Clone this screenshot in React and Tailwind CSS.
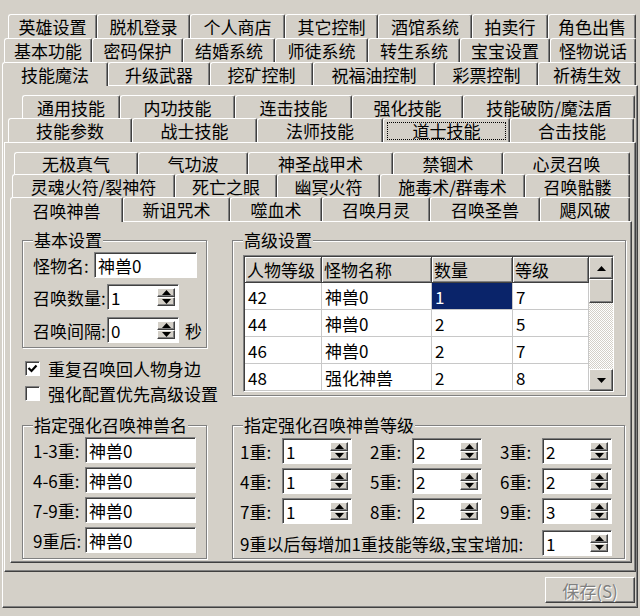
const FACE = "bg-[#d4d0c8]";
const RAISED =
  "border border-t-white border-l-white border-b-[#404040] border-r-[#404040] shadow-[inset_-1px_-1px_0_#808080]";
const SUNKEN =
  "border border-t-[#808080] border-l-[#808080] border-b-white border-r-white shadow-[inset_1px_1px_0_#404040]";
const GROUP = "relative border border-[#808080] shadow-[inset_1px_1px_0_#fff,1px_1px_0_#fff]";

const OUTER_ROWS = [
  {
    cls: "pl-[8px] h-[24px]",
    tabs: [
      ["英雄设置", "w-[89px]"],
      ["脱机登录", "w-[93px]"],
      ["个人商店", "w-[95px]"],
      ["其它控制", "w-[93px]"],
      ["酒馆系统", "w-[94px]"],
      ["拍卖行", "w-[76px]"],
      ["角色出售", "w-[88px]"],
    ],
  },
  {
    cls: "pl-[4px] h-[24px]",
    tabs: [
      ["基本功能", "w-[88px]"],
      ["密码保护", "w-[91px]"],
      ["结婚系统", "w-[92px]"],
      ["师徒系统", "w-[93px]"],
      ["转生系统", "w-[92px]"],
      ["宝宝设置", "w-[90px]"],
      ["怪物说话", "w-[86px]"],
    ],
  },
  {
    cls: "pl-[2px] h-[23px]",
    tabs: [
      ["技能魔法", "w-[106px]", "active"],
      ["升级武器", "w-[102px]"],
      ["挖矿控制", "w-[103px]"],
      ["祝福油控制", "w-[122px]"],
      ["彩票控制", "w-[103px]"],
      ["祈祷生效", "w-[98px]"],
    ],
  },
];

const SKILL_ROWS = [
  {
    cls: "pl-[19px] h-[23px]",
    tabs: [
      ["通用技能", "w-[98px]"],
      ["内功技能", "w-[115px]"],
      ["连击技能", "w-[117px]"],
      ["强化技能", "w-[111px]"],
      ["技能破防/魔法盾", "w-[172px]"],
    ],
  },
  {
    cls: "pl-[5px] h-[24px]",
    tabs: [
      ["技能参数", "w-[124px]"],
      ["战士技能", "w-[125px]"],
      ["法师技能", "w-[126px]"],
      ["道士技能", "w-[127px]", "focus"],
      ["合击技能", "w-[124px]"],
    ],
  },
];

const TAOIST_ROWS = [
  {
    cls: "pl-[9px] h-[22px]",
    tabs: [
      ["无极真气", "w-[124px]"],
      ["气功波", "w-[110px]"],
      ["神圣战甲术", "w-[145px]"],
      ["禁锢术", "w-[110px]"],
      ["心灵召唤", "w-[127px]"],
    ],
  },
  {
    cls: "pl-[7px] h-[23px]",
    tabs: [
      ["灵魂火符/裂神符", "w-[163px]"],
      ["死亡之眼", "w-[102px]"],
      ["幽冥火符", "w-[103px]"],
      ["施毒术/群毒术", "w-[145px]"],
      ["召唤骷髅", "w-[105px]"],
    ],
  },
  {
    cls: "pl-[5px] h-[24px]",
    tabs: [
      ["召唤神兽", "w-[113px]", "active"],
      ["新诅咒术", "w-[107px]"],
      ["噬血术", "w-[92px]"],
      ["召唤月灵", "w-[108px]"],
      ["召唤圣兽", "w-[110px]"],
      ["飓风破", "w-[90px]"],
    ],
  },
];

const TABLE = [
  ["42", "神兽0", "1", "7"],
  ["44", "神兽0", "2", "5"],
  ["46", "神兽0", "2", "7"],
  ["48", "强化神兽", "2", "8"],
];

const LEVELS = [
  [["1重:", "1"], ["2重:", "2"], ["3重:", "2"]],
  [["4重:", "1"], ["5重:", "2"], ["6重:", "2"]],
  [["7重:", "1"], ["8重:", "2"], ["9重:", "3"]],
];

function TabRows({ rows }) {
  return (
    <div className="flex flex-col">
      {rows.map((row, i) => (
        <div key={i} className={`flex items-end ${row.cls}`}>
          {row.tabs.map(([label, w, state]) => (
            <div
              key={label}
              className={`${w} flex items-center justify-center shrink-0 ${FACE} border-t border-l border-white border-r border-r-[#404040] shadow-[inset_-1px_0_0_#808080] rounded-tl-[3px] rounded-tr-[2px] ${
                state === "active" ? "h-[calc(100%+1px)] -mb-px relative z-10" : "h-full"
              }`}
            >
              {state === "focus" ? (
                <span className="flex items-center justify-center w-[calc(100%-6px)] h-[calc(100%-5px)] border border-dotted border-black">
                  {label}
                </span>
              ) : (
                label
              )}
            </div>
          ))}
        </div>
      ))}
    </div>
  );
}

function Arrow({ up }) {
  return (
    <svg width="9" height="5" viewBox="0 0 9 5">
      <path d={up ? "M0 5 L4.5 0 L9 5 Z" : "M0 0 L4.5 5 L9 0 Z"} fill="#000" />
    </svg>
  );
}

function Spin({ value, w }) {
  return (
    <div className={`flex h-[26px] shrink-0 ${w} bg-white ${SUNKEN}`}>
      <span className="flex-1 flex items-center pl-[3px]">{value}</span>
      <div className="flex flex-col w-[18px] my-[3px] mr-[3px]">
        <div className={`flex-1 flex items-center justify-center ${FACE} ${RAISED}`}>
          <Arrow up />
        </div>
        <div className={`flex-1 flex items-center justify-center ${FACE} ${RAISED}`}>
          <Arrow />
        </div>
      </div>
    </div>
  );
}

function TextBox({ value, w }) {
  return <div className={`flex items-center h-[26px] shrink-0 ${w} bg-white pl-[3px] ${SUNKEN}`}>{value}</div>;
}

function Group({ title, cls, children }) {
  return (
    <div className={`${GROUP} ${cls}`}>
      <span className={`absolute left-[10px] top-[-10px] px-[1px] leading-[18px] whitespace-nowrap ${FACE}`}>{title}</span>
      {children}
    </div>
  );
}

function Check({ checked, label }) {
  return (
    <div className="flex items-center h-[15px] pl-[3px] gap-[8px]">
      <div className={`w-[15px] h-[15px] shrink-0 bg-white ${SUNKEN} flex items-center justify-center`}>
        {checked && (
          <svg width="11" height="11" viewBox="0 0 11 11">
            <path d="M1.5 5 L4.5 8 L9.5 2.5" stroke="#000" strokeWidth="2.2" fill="none" />
          </svg>
        )}
      </div>
      <span className="whitespace-nowrap">{label}</span>
    </div>
  );
}

function ScrollBtn({ up }) {
  return (
    <div className={`h-[22px] flex items-center justify-center ${FACE} ${RAISED}`}>
      <Arrow up={up} />
    </div>
  );
}

function MonsterTable() {
  const widths = ["w-[77px]", "w-[110px]", "w-[81px]", "w-[76px]"];
  const heads = ["人物等级", "怪物名称", "数量", "等级"];
  return (
    <div className={`flex w-[371px] pt-px pl-px bg-white ${SUNKEN}`}>
      <div className="flex flex-col">
        <div className="flex h-[26px]">
          {heads.map((h, i) => (
            <div
              key={h}
              className={`${widths[i]} flex items-center pl-[2px] ${FACE} border-r border-b border-[#404040] shadow-[inset_1px_1px_0_#fff,inset_-1px_-1px_0_#808080]`}
            >
              {h}
            </div>
          ))}
        </div>
        {TABLE.map((row, r) => (
          <div key={r} className="flex h-[27px]">
            {row.map((cell, c) => (
              <div
                key={c}
                className={`${widths[c]} flex items-center pl-[3px] border-r border-b border-[#c8c8c8] ${
                  r === 0 && c === 2 ? "bg-[#0a246a] text-white" : "bg-white"
                }`}
              >
                {cell}
              </div>
            ))}
          </div>
        ))}
      </div>
      <div className="flex flex-col w-[24px]">
        <ScrollBtn up />
        <div className={`h-[24px] ${FACE} ${RAISED}`} />
        <div className="flex-1 bg-[repeating-conic-gradient(#ffffff_0_25%,#d4d0c8_0_50%)] bg-[length:2px_2px]" />
        <ScrollBtn />
      </div>
    </div>
  );
}

export default function App() {
  return (
    <div
      className={`w-[640px] h-[616px] overflow-hidden ${FACE} pt-[14px] text-[17px] leading-none text-black font-['Noto_Sans_CJK_SC','Liberation_Sans',sans-serif]`}
    >
      <TabRows rows={OUTER_ROWS} />

      {/* outer tab page */}
      <div className={`ml-[2px] w-[636px] flex flex-col pt-[9px] pb-[4px] ${FACE} ${RAISED}`}>
        <TabRows rows={SKILL_ROWS} />

        {/* skill tab page */}
        <div className={`ml-px w-[632px] pt-[9px] pb-[8px] ${FACE} ${RAISED}`}>
          <TabRows rows={TAOIST_ROWS} />

          {/* taoist tab page */}
          <div className={`ml-[5px] w-[622px] h-[342px] pl-[11px] pt-[18px] ${FACE} ${RAISED}`}>
            <div className="flex gap-[25px]">
              <div className="flex flex-col w-[185px] shrink-0">
                <Group title="基本设置" cls="h-[108px] pt-[11px] pl-[10px] flex flex-col">
                  <div className="flex items-center">
                    <span className="w-[61px] whitespace-nowrap">怪物名:</span>
                    <TextBox value="神兽0" w="w-[103px]" />
                  </div>
                  <div className="flex items-center mt-[6px]">
                    <span className="w-[74px] whitespace-nowrap">召唤数量:</span>
                    <Spin value="1" w="w-[72px]" />
                  </div>
                  <div className="flex items-center mt-[7px]">
                    <span className="w-[74px] whitespace-nowrap">召唤间隔:</span>
                    <Spin value="0" w="w-[72px]" />
                    <span className="ml-[6px]">秒</span>
                  </div>
                </Group>
                <div className="mt-[13px]">
                  <Check checked label="重复召唤回人物身边" />
                </div>
                <div className="mt-[10px]">
                  <Check label="强化配置优先高级设置" />
                </div>
              </div>

              <Group title="高级设置" cls="w-[394px] h-[156px] pt-[14px] pl-[10px] shrink-0">
                <MonsterTable />
              </Group>
            </div>

            <div className="flex gap-[25px] mt-[24px]">
              <Group title="指定强化召唤神兽名" cls="w-[185px] h-[134px] pt-[11px] pl-[10px] flex flex-col gap-[4px] shrink-0">
                {["1-3重:", "4-6重:", "7-9重:", "9重后:"].map((l) => (
                  <div key={l} className="flex items-center">
                    <span className="w-[52px] whitespace-nowrap">{l}</span>
                    <TextBox value="神兽0" w="w-[111px]" />
                  </div>
                ))}
              </Group>

              <Group title="指定强化召唤神兽等级" cls="w-[393px] h-[134px] pt-[12px] pl-[7px] flex flex-col gap-[4px] shrink-0">
                {LEVELS.map((row, i) => (
                  <div key={i} className="flex items-center gap-[18px]">
                    {row.map(([l, v]) => (
                      <div key={l} className="flex items-center">
                        <span className="w-[42px] whitespace-nowrap">{l}</span>
                        <Spin value={v} w="w-[70px]" />
                      </div>
                    ))}
                  </div>
                ))}
                <div className="flex items-center mt-[2px]">
                  <span className="w-[302px] whitespace-nowrap">9重以后每增加1重技能等级,宝宝增加:</span>
                  <Spin value="1" w="w-[70px]" />
                </div>
              </Group>
            </div>
          </div>
        </div>

        <div
          className={`self-end mr-[2px] mt-[5px] w-[90px] h-[26px] flex items-center justify-center ${FACE} ${RAISED} text-[#808080] [text-shadow:1px_1px_0_#fff]`}
        >
          保存(S)
        </div>
      </div>
    </div>
  );
}
